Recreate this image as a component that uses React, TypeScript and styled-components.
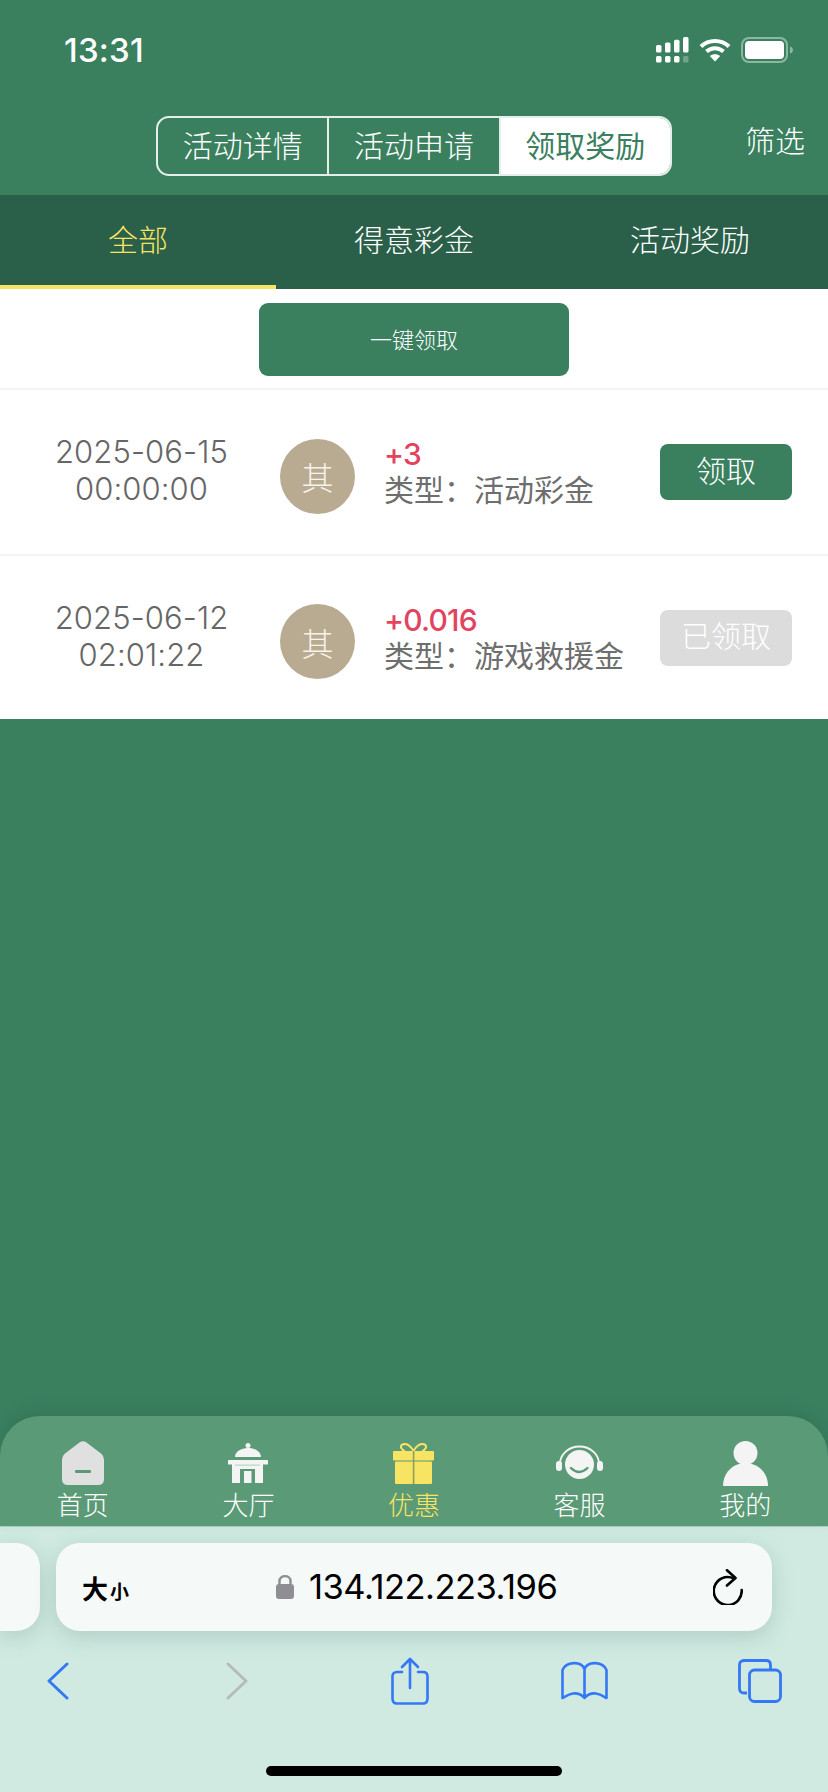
import React from "react";
import styled, { createGlobalStyle } from "styled-components";

const GlobalStyle = createGlobalStyle`
  html, body {
    margin: 0;
    padding: 0;
    background: #3a805f;
  }
  * {
    box-sizing: border-box;
  }
`;

const SRoot = styled.div`
  width: 828px;
  height: 1792px;
  display: flex;
  flex-direction: column;
  overflow: hidden;
  background: #3a805f;
  font-family: Inter, "Noto Sans CJK SC", sans-serif;
  font-weight: 300;
  color: #fff;
`;

const SStatusBar = styled.div`
  height: 100px;
  display: flex;
  align-items: center;
  padding: 0 34px 0 64px;
`;

const STime = styled.div`
  font-size: 33px;
  font-weight: 500;
  letter-spacing: 0.2px;
  flex: 1;
`;

const SStatusIcons = styled.div`
  display: flex;
  align-items: center;
  gap: 10px;
`;

const SHeader = styled.div`
  height: 95px;
  padding: 16px 23px 0 156px;
  display: flex;
  align-items: flex-start;
  justify-content: space-between;
`;

const SSegment = styled.div`
  width: 516px;
  height: 60px;
  display: flex;
  border: 2px solid #e4efe9;
  border-radius: 13px;
  overflow: hidden;
`;

const SSegmentItem = styled.div<{ $active?: boolean }>`
  flex: 1;
  display: flex;
  align-items: center;
  justify-content: center;
  padding-bottom: 4px;
  font-size: 30px;
  font-weight: ${(p) => (p.$active ? 400 : 300)};
  background: ${(p) => (p.$active ? "#fff" : "transparent")};
  color: ${(p) => (p.$active ? "#3a805f" : "#fff")};
  & + & {
    border-left: 2px solid #e4efe9;
  }
`;

const SFilter = styled.div`
  font-size: 30px;
  line-height: 50px;
`;

const STabs = styled.div`
  height: 94px;
  display: grid;
  grid-template-columns: repeat(3, 1fr);
  background: #2a5f49;
`;

const STab = styled.div<{ $active?: boolean }>`
  display: flex;
  align-items: center;
  justify-content: center;
  padding-bottom: 4px;
  font-size: 30px;
  color: ${(p) => (p.$active ? "#f7e463" : "#fff")};
  border-bottom: 4px solid ${(p) => (p.$active ? "#f7e463" : "transparent")};
`;

const SContent = styled.div`
  background: #fff;
`;

const SClaimBar = styled.div`
  height: 101px;
  padding-top: 14px;
  display: flex;
  justify-content: center;
  border-bottom: 2px solid #f4f4f4;
`;

const SClaimAll = styled.div`
  width: 310px;
  height: 73px;
  border-radius: 9px;
  background: #3a805f;
  display: flex;
  align-items: center;
  justify-content: center;
  padding-bottom: 4px;
  font-size: 22px;
`;

const SRow = styled.div<{ $last?: boolean }>`
  height: ${(p) => (p.$last ? "163px" : "166px")};
  display: flex;
  align-items: center;
  padding-right: 36px;
  border-bottom: ${(p) => (p.$last ? "none" : "2px solid #f4f4f4")};
  color: #666;
`;

const SDate = styled.div`
  width: 280px;
  padding: 0 0 4px 3px;
  text-align: center;
  font-size: 31px;
  line-height: 37px;
  letter-spacing: 0.1px;
  flex: none;
`;

const SAvatar = styled.div`
  width: 75px;
  height: 75px;
  margin-top: 8px;
  flex: none;
  border-radius: 50%;
  background: #b9ab92;
  color: #f7f3ea;
  display: flex;
  align-items: center;
  justify-content: center;
  font-size: 32px;
`;

const SInfo = styled.div`
  flex: 1;
  margin-left: 29px;
`;

const SAmount = styled.div`
  font-size: 30px;
  line-height: 37px;
  font-weight: 500;
  color: #e2445f;
  letter-spacing: -0.8px;
`;

const SKind = styled.div`
  font-size: 30px;
  line-height: 35px;
  font-weight: 400;
  color: #6e6e6e;
  white-space: nowrap;
`;

const SAction = styled.div<{ $done?: boolean }>`
  width: 132px;
  height: 56px;
  flex: none;
  border-radius: 8px;
  display: flex;
  align-items: center;
  justify-content: center;
  padding-bottom: 7px;
  font-size: 30px;
  color: #fff;
  background: ${(p) => (p.$done ? "#dcdcdc" : "#3a805f")};
`;

const SSpacer = styled.div`
  flex: 1;
`;

const SNav = styled.div`
  height: 110px;
  padding-top: 25px;
  display: grid;
  grid-template-columns: repeat(5, 1fr);
  background: #5a9a77;
  border-radius: 40px 40px 0 0;
  box-shadow: 0 -6px 14px rgba(30, 80, 60, 0.18);
  position: relative;
`;

const SNavItem = styled.div<{ $active?: boolean }>`
  display: flex;
  flex-direction: column;
  align-items: center;
  color: ${(p) => (p.$active ? "#f7e463" : "#fff")};
`;

const SNavIcon = styled.div`
  height: 44px;
  display: flex;
  align-items: center;
`;

const SNavLabel = styled.div`
  margin-top: 6px;
  font-size: 26px;
  line-height: 30px;
`;

const SBrowser = styled.div`
  height: 266px;
  padding-top: 16px;
  display: flex;
  flex-direction: column;
  background: #d0eae2;
  border-top: 1px solid #b3cfc4;
  color: #000;
`;

const SUrlRow = styled.div`
  height: 88px;
  flex: none;
  display: flex;
  gap: 16px;
`;

const SPrevCard = styled.div`
  width: 40px;
  border-radius: 0 24px 24px 0;
  background: #f5f9f8;
  box-shadow: 0 6px 22px rgba(60, 110, 90, 0.22);
`;

const SUrlCard = styled.div`
  width: 716px;
  padding: 0 29px 0 26px;
  display: flex;
  align-items: center;
  border-radius: 24px;
  background: #f5f9f8;
  box-shadow: 0 6px 22px rgba(60, 110, 90, 0.22);
`;

const SFontSize = styled.div`
  width: 194px;
  font-size: 26px;
  font-weight: 700;
  display: flex;
  align-items: baseline;
  font-family: "Noto Sans CJK SC", sans-serif;
`;

const SFontSizeSmall = styled.span`
  margin-left: 2px;
  font-size: 19px;
`;

const SAddress = styled.div`
  flex: 1;
  display: flex;
  align-items: center;
  gap: 15px;
  padding-bottom: 2px;
  font-size: 34.5px;
  font-weight: 400;
  letter-spacing: -0.5px;
`;

const SToolbar = styled.div`
  width: 872px;
  height: 52px;
  margin: 24px 0 0 -30px;
  display: grid;
  grid-template-columns: 175px 184px 162px 187px 164px;
  justify-items: center;
  align-items: center;
`;

const SHomeBar = styled.div`
  width: 296px;
  height: 10px;
  margin: auto auto 16px;
  border-radius: 5px;
  background: #000;
`;

const records = [
  { date: "2025-06-15", time: "00:00:00", amount: "+3", kind: "活动彩金", done: false },
  { date: "2025-06-12", time: "02:01:22", amount: "+0.016", kind: "游戏救援金", done: true },
];

const SignalIcon = () => (
  <svg width="33" height="26" viewBox="0 0 33 26" fill="#fff">
    <rect x="0" y="8" width="5.5" height="7.5" rx="1.5" />
    <rect x="9" y="5.5" width="5.5" height="10" rx="1.5" />
    <rect x="18" y="2.8" width="5.5" height="12.7" rx="1.5" />
    <rect x="27" y="0" width="5.5" height="15.5" rx="1.5" />
    <rect x="0" y="19" width="5.5" height="6.5" rx="1.5" />
    <rect x="9" y="19" width="5.5" height="6.5" rx="1.5" />
    <rect x="18" y="19" width="5.5" height="6.5" rx="1.5" />
    <rect x="27" y="19" width="5.5" height="6.5" rx="1.5" fill="#6fa58b" />
  </svg>
);

const WifiIcon = () => (
  <svg width="32" height="24" viewBox="0 0 32 24" fill="none" stroke="#fff" strokeWidth="4">
    <path d="M2 8.5C9.5 1 22.5 1 30 8.5" />
    <path d="M7.5 13.5C12.5 9 19.5 9 24.5 13.5" />
    <path d="M16 23.5L10.8 18C14 15.6 18 15.6 21.2 18Z" fill="#fff" stroke="none" />
  </svg>
);

const BatteryIcon = () => (
  <svg width="53" height="26" viewBox="0 0 53 26">
    <rect x="1" y="1" width="45" height="24" rx="7" fill="none" stroke="#8ab8a2" strokeWidth="2" />
    <rect x="4" y="4" width="39" height="18" rx="4" fill="#fff" />
    <path d="M49 9.5C51 10 52 11.5 52 13C52 14.5 51 16 49 16.5Z" fill="#8ab8a2" />
  </svg>
);

const HomeIcon = () => (
  <svg width="42" height="44" viewBox="0 0 42 44">
    <path
      d="M17.5 1.5Q21 -0.8 24.5 1.5L39 12.5Q42 15 42 18.5V38Q42 44 36 44H6Q0 44 0 38V18.5Q0 15 3 12.5Z"
      fill="#e0e0e0"
    />
    <rect x="13" y="29" width="16" height="3" rx="1" fill="#5a9a77" />
  </svg>
);

const HallIcon = () => (
  <svg width="40" height="40" viewBox="0 0 40 40">
    <circle cx="20" cy="2.5" r="2.5" fill="#f4f4f4" />
    <path d="M7 14C7 8.5 13 5 20 5S33 8.5 33 14Z" fill="#f4f4f4" />
    <rect x="0" y="17" width="40" height="4.5" rx="0.5" fill="#f4f4f4" />
    <rect x="4" y="21" width="31" height="19" fill="#f4f4f4" />
    <rect x="7" y="21.5" width="25" height="1.2" fill="#b9d3c5" />
    <rect x="12" y="26" width="15" height="14" fill="#5a9a77" />
    <rect x="16" y="28" width="7.5" height="12" fill="#f4f4f4" />
  </svg>
);

const GiftIcon = () => (
  <svg width="41" height="41" viewBox="0 0 41 41">
    <path
      d="M20.5 8C17 2 13 0 9.5 1.5C6.5 3 8.5 7.5 12 8M20.5 8C24 2 28 0 31.5 1.5C34.5 3 32.5 7.5 29 8"
      fill="none"
      stroke="#f7e463"
      strokeWidth="2"
    />
    <rect x="0" y="8" width="41" height="9.5" rx="1" fill="#f7e463" />
    <rect x="2" y="18.5" width="37" height="22.5" rx="1" fill="#f7e463" />
    <rect x="19.8" y="8" width="1.6" height="33" fill="#8d9f5e" />
  </svg>
);

const ServiceIcon = () => (
  <svg width="47" height="36" viewBox="0 0 47 36">
    <path d="M4 19A19.5 17.5 0 0 1 43 19" fill="none" stroke="#f4f4f4" strokeWidth="2" />
    <rect x="0" y="16" width="6" height="10" rx="3" fill="#f4f4f4" />
    <rect x="41" y="16" width="6" height="10" rx="3" fill="#f4f4f4" />
    <circle cx="23.5" cy="19.5" r="14.5" fill="#f4f4f4" />
    <path d="M15 23Q23 31 31.5 23" fill="none" stroke="#5a9a77" strokeWidth="2.4" strokeLinecap="round" />
  </svg>
);

const PersonIcon = () => (
  <svg width="45" height="45" viewBox="0 0 45 45" fill="#f4f4f4">
    <ellipse cx="22.5" cy="12" rx="12" ry="12" />
    <path d="M0 45C0 33 8 25 16 23H29C37 25 45 33 45 45Z" />
  </svg>
);

const LockIcon = () => (
  <svg width="18" height="25" viewBox="0 0 18 25">
    <path d="M3.5 11V7C3.5 0.5 14.5 0.5 14.5 7V11" fill="none" stroke="#8e8e93" strokeWidth="2.4" />
    <rect x="0" y="10" width="18" height="15" rx="3" fill="#8e8e93" />
  </svg>
);

const ReloadIcon = () => (
  <svg width="30" height="36" viewBox="0 0 30 36" fill="none" stroke="#000" strokeWidth="2.6" strokeLinecap="round" strokeLinejoin="round">
    <path d="M21 9.5Q18 8 14.7 8A14 14 0 1 0 28.7 21" />
    <path d="M14 1.2L22.5 9L14 16.5" />
  </svg>
);

const BackIcon = () => (
  <svg width="22" height="38" viewBox="0 0 22 38" fill="none" stroke="#3478f6" strokeWidth="3" strokeLinecap="round" strokeLinejoin="round">
    <path d="M20 2L2 19L20 36" />
  </svg>
);

const ForwardIcon = () => (
  <svg width="22" height="38" viewBox="0 0 22 38" fill="none" stroke="#b3bcb9" strokeWidth="3" strokeLinecap="round" strokeLinejoin="round">
    <path d="M2 2L20 19L2 36" />
  </svg>
);

const ShareIcon = () => (
  <svg width="38" height="48" viewBox="0 0 38 48" fill="none" stroke="#3478f6" strokeWidth="2.6" strokeLinecap="round" strokeLinejoin="round">
    <path d="M11 15H6Q1.5 15 1.5 19.5V41.5Q1.5 46.5 6 46.5H32Q36.5 46.5 36.5 41.5V19.5Q36.5 15 32 15H27" />
    <path d="M19 31V2M11 10L19 2L27 10" />
  </svg>
);

const BookIcon = () => (
  <svg width="47" height="40" viewBox="0 0 47 40" fill="none" stroke="#3478f6" strokeWidth="2.6" strokeLinecap="round" strokeLinejoin="round">
    <path d="M23.5 8V37C20 33 16 32 12 32.5C8 33 5 35 1.5 37V9C5 0.5 20 -0.5 23.5 8C27 -0.5 42 0.5 45.5 9V37C42 35 39 33 35 32.5C31 32 27 33 23.5 37" />
  </svg>
);

const TabsIcon = () => (
  <svg width="44" height="44" viewBox="0 0 44 44" fill="none" stroke="#3478f6" strokeWidth="2.8" strokeLinejoin="round">
    <path d="M9 34H6Q1.5 34 1.5 29.5V6Q1.5 1.5 6 1.5H28Q32.5 1.5 32.5 6V11" />
    <rect x="11.5" y="11" width="31" height="31.5" rx="5" />
  </svg>
);

const navItems = [
  { label: "首页", icon: <HomeIcon /> },
  { label: "大厅", icon: <HallIcon /> },
  { label: "优惠", icon: <GiftIcon />, active: true },
  { label: "客服", icon: <ServiceIcon /> },
  { label: "我的", icon: <PersonIcon /> },
];

const App = () => {
  return (
    <SRoot>
      <GlobalStyle />
      <SStatusBar>
        <STime>13:31</STime>
        <SStatusIcons>
          <SignalIcon />
          <WifiIcon />
          <BatteryIcon />
        </SStatusIcons>
      </SStatusBar>
      <SHeader>
        <SSegment>
          <SSegmentItem>活动详情</SSegmentItem>
          <SSegmentItem>活动申请</SSegmentItem>
          <SSegmentItem $active>领取奖励</SSegmentItem>
        </SSegment>
        <SFilter>筛选</SFilter>
      </SHeader>
      <STabs>
        <STab $active>全部</STab>
        <STab>得意彩金</STab>
        <STab>活动奖励</STab>
      </STabs>
      <SContent>
        <SClaimBar>
          <SClaimAll>一键领取</SClaimAll>
        </SClaimBar>
        {records.map((r, i) => (
          <SRow key={r.date} $last={i === records.length - 1}>
            <SDate>
              {r.date}
              <br />
              {r.time}
            </SDate>
            <SAvatar>其</SAvatar>
            <SInfo>
              <SAmount>{r.amount}</SAmount>
              <SKind>类型：{r.kind}</SKind>
            </SInfo>
            <SAction $done={r.done}>{r.done ? "已领取" : "领取"}</SAction>
          </SRow>
        ))}
      </SContent>
      <SSpacer />
      <SNav>
        {navItems.map((item) => (
          <SNavItem key={item.label} $active={item.active}>
            <SNavIcon>{item.icon}</SNavIcon>
            <SNavLabel>{item.label}</SNavLabel>
          </SNavItem>
        ))}
      </SNav>
      <SBrowser>
        <SUrlRow>
          <SPrevCard />
          <SUrlCard>
            <SFontSize>
              大<SFontSizeSmall>小</SFontSizeSmall>
            </SFontSize>
            <SAddress>
              <LockIcon />
              134.122.223.196
            </SAddress>
            <ReloadIcon />
          </SUrlCard>
        </SUrlRow>
        <SToolbar>
          <BackIcon />
          <ForwardIcon />
          <ShareIcon />
          <BookIcon />
          <TabsIcon />
        </SToolbar>
        <SHomeBar />
      </SBrowser>
    </SRoot>
  );
};

export default App;
